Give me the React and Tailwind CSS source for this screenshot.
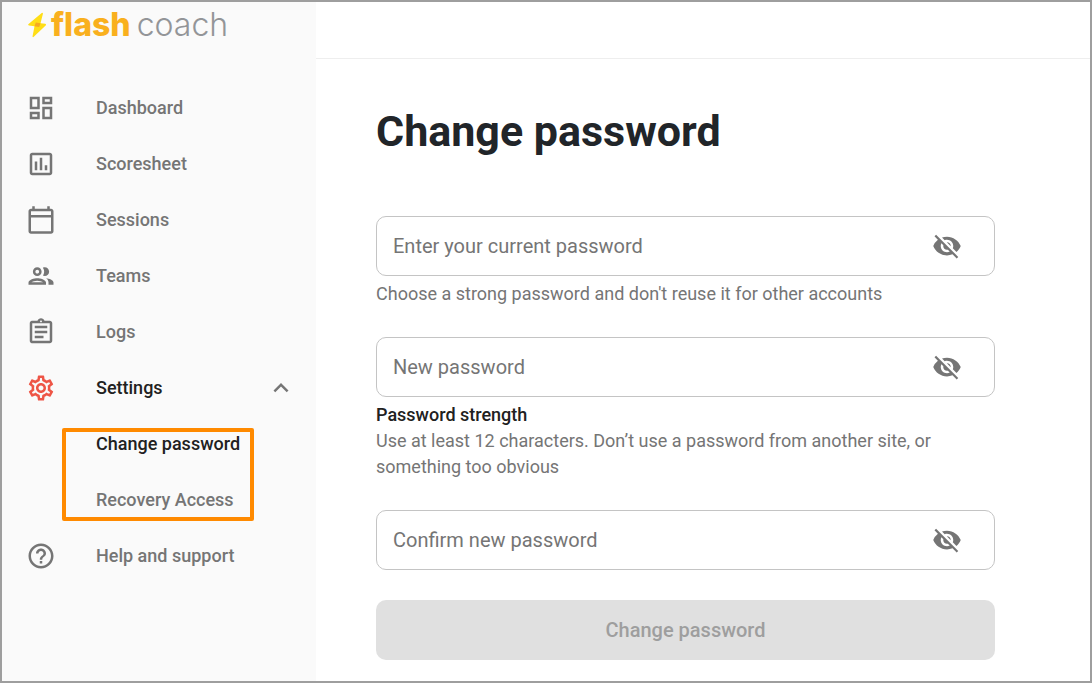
import { useState } from "react";
import {
  MdOutlineDashboard,
  MdOutlineAssessment,
  MdOutlineCalendarToday,
  MdOutlineGroup,
  MdOutlineAssignment,
  MdOutlineSettings,
  MdHelpOutline,
  MdKeyboardArrowUp,
  MdVisibilityOff,
} from "react-icons/md";

const mainLinks = [
  { label: "Dashboard", icon: MdOutlineDashboard },
  { label: "Scoresheet", icon: MdOutlineAssessment },
  { label: "Sessions", icon: MdOutlineCalendarToday },
  { label: "Teams", icon: MdOutlineGroup },
  { label: "Logs", icon: MdOutlineAssignment },
];

function Logo() {
  return (
    <a href="#" className="flex h-[46px] items-center pl-[25px] font-[Inter,sans-serif] text-[32px] leading-8">
      <svg viewBox="0 0 20 26" className="h-[26px] w-5 shrink-0" aria-hidden="true">
        <path d="M14.700 1 1.300 12.300Q.7 13.300 2 13.600L7.500 14.300 5.500 24.500Q5.800 25.600 6.800 24.800L18.900 13.200Q19.500 12 18.200 11.700L13.500 11.200 16 1.600Q15.700.5 14.700 1Z" fill="#ffde17" />
        <path d="M8.800 10.600 13.500 11.200 12.200 15 7.500 14.300Z" fill="#f7a823" />
      </svg>
      <span className="ml-1 font-extrabold text-[#f9b01e]">flash</span>
      <span className="ml-1.5 font-light text-[#939598]">coach</span>
    </a>
  );
}

function NavLink({ label, icon: Icon }) {
  return (
    <li>
      <a href="#" className="flex h-14 items-center gap-10 pl-6 text-[#757575]">
        <Icon size={30} />
        {label}
      </a>
    </li>
  );
}

function Sidebar() {
  return (
    <aside className="w-[314px] shrink-0 bg-[#fafafa]">
      <Logo />
      <nav className="pt-8 text-lg font-medium">
        <ul>
          {mainLinks.map((link) => (
            <NavLink key={link.label} {...link} />
          ))}
          <li>
            <button type="button" aria-expanded="true" className="flex h-14 w-full items-center gap-10 pl-6 pr-5 text-[#212121]">
              <MdOutlineSettings size={30} color="#ee5546" />
              Settings
              <MdKeyboardArrowUp size={30} color="#757575" className="ml-auto" />
            </button>
            <ul className="relative">
              <li>
                <a href="#" aria-current="page" className="flex h-14 items-center pl-[94px] text-[#212121]">Change password</a>
              </li>
              <li>
                <a href="#" className="flex h-14 items-center pl-[94px] text-[#757575]">Recovery Access</a>
              </li>
              <li aria-hidden="true" className="pointer-events-none absolute top-3 bottom-[7px] left-[60px] w-48 rounded-xs border-4 border-[#ff8a00]" />
            </ul>
          </li>
          <NavLink label="Help and support" icon={MdHelpOutline} />
        </ul>
      </nav>
    </aside>
  );
}

function PasswordField({ id, label, children }) {
  const [visible, setVisible] = useState(false);
  return (
    <div>
      <div className="relative flex h-[60px] items-center rounded-[10px] border border-[#c4c4c4] pr-8">
        <input
          id={id}
          type={visible ? "text" : "password"}
          placeholder=" "
          className="peer h-full min-w-0 flex-1 bg-transparent pl-4 text-xl text-[#212121] outline-none"
        />
        <label htmlFor={id} className="invisible absolute left-4 text-xl text-[#757575] peer-placeholder-shown:visible">
          {label}
        </label>
        <button type="button" aria-label="Toggle password visibility" onClick={() => setVisible(!visible)} className="text-[#757575]">
          <MdVisibilityOff size={30} />
        </button>
      </div>
      {children}
    </div>
  );
}

export default function App() {
  return (
    <div className="flex min-h-screen border-2 border-[#9e9e9e] bg-white font-[Roboto,sans-serif]">
      <Sidebar />
      <div className="min-w-0 flex-1">
        <header className="h-[57px] border-b border-[#eeeeee]" />
        <main className="pt-11 pr-[95px] pl-[60px]">
          <h1 className="text-[43px] leading-[56px] font-bold text-[#212529]">Change password</h1>
          <form className="pt-[57px] text-lg leading-[26px] text-[#757575]">
            <PasswordField id="current" label="Enter your current password">
              <p className="pt-[5px] pb-[30px]">Choose a strong password and don't reuse it for other accounts</p>
            </PasswordField>
            <PasswordField id="new" label="New password">
              <p className="pt-[5px] font-medium text-[#212121]">Password strength</p>
              <p className="pb-[30px]">Use at least 12 characters. Don’t use a password from another site, or something too obvious</p>
            </PasswordField>
            <PasswordField id="confirm" label="Confirm new password" />
            <button type="button" disabled className="mt-[30px] h-[60px] w-full rounded-[10px] bg-[#e0e0e0] text-xl font-medium text-[#9e9e9e]">
              Change password
            </button>
          </form>
        </main>
      </div>
    </div>
  );
}
